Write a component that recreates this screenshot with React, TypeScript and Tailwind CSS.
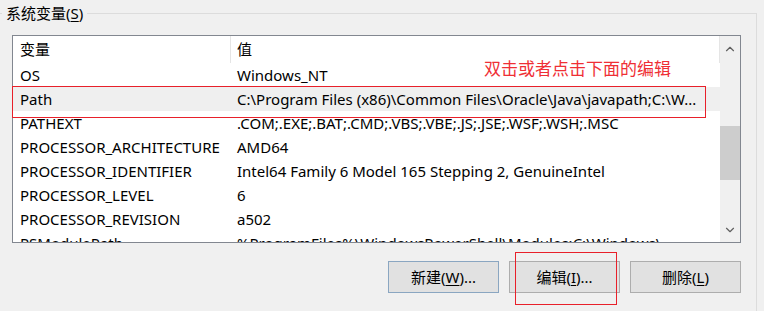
import { ChevronUp, ChevronDown } from 'lucide-react';

const rows: { name: string; value: string; selected?: boolean }[] = [
  { name: 'OS', value: 'Windows_NT' },
  { name: 'Path', value: 'C:\\Program Files (x86)\\Common Files\\Oracle\\Java\\javapath;C:\\W...', selected: true },
  { name: 'PATHEXT', value: '.COM;.EXE;.BAT;.CMD;.VBS;.VBE;.JS;.JSE;.WSF;.WSH;.MSC' },
  { name: 'PROCESSOR_ARCHITECTURE', value: 'AMD64' },
  { name: 'PROCESSOR_IDENTIFIER', value: 'Intel64 Family 6 Model 165 Stepping 2, GenuineIntel' },
  { name: 'PROCESSOR_LEVEL', value: '6' },
  { name: 'PROCESSOR_REVISION', value: 'a502' },
  { name: 'PSModulePath', value: '%ProgramFiles%\\WindowsPowerShell\\Modules;C:\\Windows\\...' },
];

const font = 'font-["Segoe_UI","Noto_Sans","Noto_Sans_CJK_SC",sans-serif]';

const Btn = ({ label, hot, rest, focus }: { label: string; hot: string; rest: string; focus?: boolean }) => (
  <button
    className={`w-[111px] h-[32px] bg-[#e1e1e1] border text-[15px] text-black flex items-center justify-center ${
      focus ? 'border-[#8aa6c1]' : 'border-[#adadad]'
    }`}
  >
    {label}(<span className="underline underline-offset-2">{hot}</span>){rest}
  </button>
);

export default function App() {
  return (
    <div className={`relative w-[764px] h-[311px] overflow-hidden bg-[#f0f0f0] ${font}`}>
      {/* group box */}
      <div className="relative mt-[13px] w-[757px] h-[320px] border-t border-r border-[#dcdcdc]">
        <span className="absolute left-[2px] -top-[11px] px-[4px] bg-[#f0f0f0] text-[15px] leading-[20px] text-black">
          系统变量(<span className="underline underline-offset-2">S</span>)
        </span>

        <div className="ml-[12px] mt-[21px] w-[729px] h-[208px] border border-[#828790] bg-white flex overflow-hidden">
          <div className="flex-1 flex flex-col overflow-hidden text-[15px] text-black">
            {/* header */}
            <div className="flex h-[27px] shrink-0 items-center">
              <div className="w-[218px] h-full pl-[7px] flex items-center border-r border-[#e5e5e5]">变量</div>
              <div className="flex-1 h-full pl-[6px] flex items-center border-r border-[#e5e5e5]">值</div>
            </div>
            {rows.map((r) => (
              <div
                key={r.name}
                className={`flex h-[24px] shrink-0 items-center whitespace-nowrap ${r.selected ? 'bg-[#efefef]' : ''}`}
              >
                <div className="w-[218px] pl-[7px] overflow-hidden">{r.name}</div>
                <div className="flex-1 pl-[6px] overflow-hidden">{r.value}</div>
              </div>
            ))}
          </div>

          {/* scrollbar */}
          <div className="w-[20px] shrink-0 bg-[#f0f0f0] flex flex-col items-center">
            <div className="h-[26px] flex items-center justify-center text-[#606060]">
              <ChevronUp size={14} strokeWidth={2} />
            </div>
            <div className="mt-[64px] w-full h-[54px] bg-[#cdcdcd]" />
            <div className="mt-auto h-[24px] flex items-center justify-center text-[#606060]">
              <ChevronDown size={14} strokeWidth={2} />
            </div>
          </div>
        </div>

        <div className="w-[741px] mt-[18px] flex justify-end gap-[10px]">
          <Btn label="新建" hot="W" rest="..." focus />
          <Btn label="编辑" hot="I" rest="..." />
          <Btn label="删除" hot="L" rest="" />
        </div>
      </div>

      {/* annotations */}
      <div className="absolute left-[484px] top-[58px] text-[17px] leading-[22px] text-[#ef2f35]">
        双击或者点击下面的编辑
      </div>
      <div className="absolute left-[12px] top-[86px] w-[694px] h-[32px] border border-[#e8202a]" />
      <div className="absolute left-[515px] top-[252px] w-[102px] h-[53px] border border-[#e8202a]" />
    </div>
  );
}
